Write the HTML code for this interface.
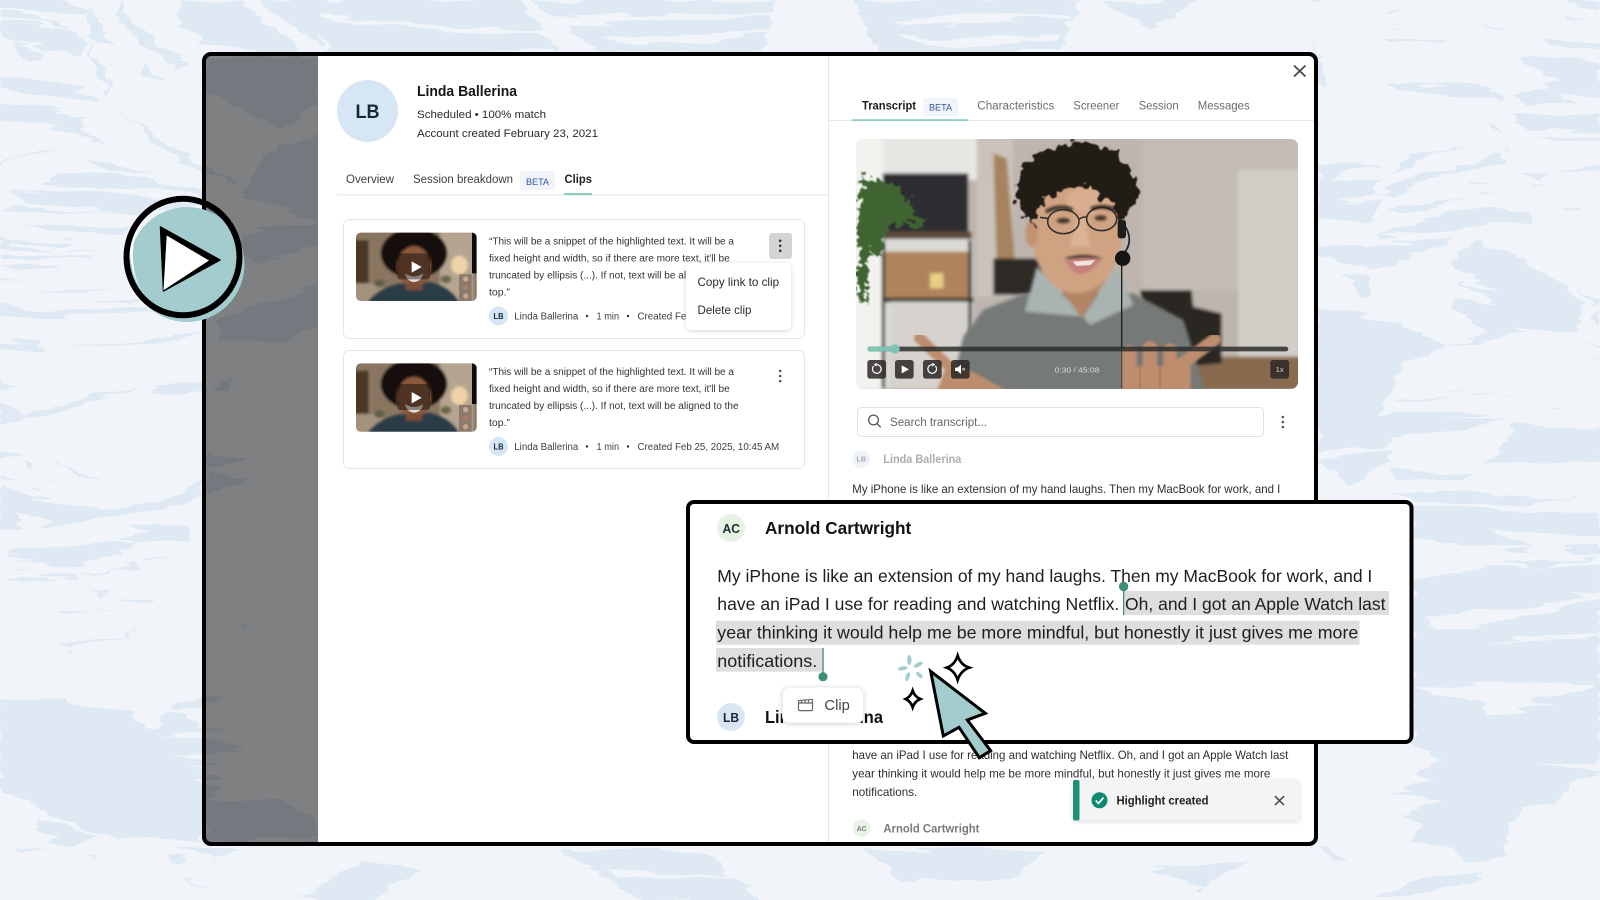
<!DOCTYPE html>
<html lang="en"><head><meta charset="utf-8"><title>Clips and transcript</title>
<style>
html,body{margin:0;padding:0;background:#f1f5f9;width:1600px;height:900px;overflow:hidden}
svg{display:block}
text{font-family:"Liberation Sans",sans-serif;fill:#2a2a2a;white-space:pre}
.b{font-weight:700}
.s{font-size:9.8px;fill:#333}
.m{font-size:9.8px;fill:#404040}
.t{font-size:11.5px;fill:#3c3c3c}
.g{font-size:11.5px;fill:#6d6d6d}
.big{font-size:17.5px;fill:#1e1e1e}
.body{font-size:11.8px;fill:#2e2e2e}
.beta{font-size:9.5px;fill:#2f56a0}
</style></head><body>
<svg xmlns="http://www.w3.org/2000/svg" width="1600" height="900" viewBox="0 0 1600 900">
<defs>
<filter id="brush" filterUnits="userSpaceOnUse" x="0" y="0" width="1600" height="900">
<feTurbulence type="fractalNoise" baseFrequency=".012 .1" numOctaves="3" seed="4" result="n"/>
<feDisplacementMap in="SourceGraphic" in2="n" scale="16" xChannelSelector="R" yChannelSelector="G"/>
</filter>
<filter id="bl" x="-5%" y="-5%" width="110%" height="110%"><feGaussianBlur stdDeviation="5"/></filter>
<filter id="bl2" x="-5%" y="-5%" width="110%" height="110%"><feGaussianBlur stdDeviation="4"/></filter>
<filter id="curl" x="-15%" y="-15%" width="130%" height="130%">
<feTurbulence type="fractalNoise" baseFrequency=".035" numOctaves="2" seed="7" result="n"/>
<feDisplacementMap in="SourceGraphic" in2="n" scale="55" xChannelSelector="R" yChannelSelector="G"/>
<feGaussianBlur stdDeviation="1.5"/>
</filter>
<filter id="leaf" x="-15%" y="-15%" width="130%" height="130%">
<feTurbulence type="fractalNoise" baseFrequency=".05" numOctaves="2" seed="3" result="n"/>
<feDisplacementMap in="SourceGraphic" in2="n" scale="70" xChannelSelector="R" yChannelSelector="G"/>
<feGaussianBlur stdDeviation="2"/>
</filter>
<filter id="sh" x="-20%" y="-20%" width="140%" height="140%"><feDropShadow dx="0" dy="1" stdDeviation="2.5" flood-color="#000" flood-opacity=".16"/></filter>
<clipPath id="vc"><rect x="856" y="139" width="442" height="250" rx="7"/></clipPath>
<clipPath id="tc"><rect x="48" y="38" width="362" height="205" rx="14"/></clipPath>
<g id="thumb"><g clip-path="url(#tc)">
<g filter="url(#bl2)">
<rect x="40" y="30" width="380" height="220" fill="#8a7661"/>
<rect x="40" y="60" width="46" height="135" fill="#4a3827"/>
<rect x="40" y="190" width="90" height="60" fill="#a3927e"/>
<rect x="300" y="30" width="100" height="215" fill="#b5a48f"/>
<ellipse cx="358" cy="135" rx="25" ry="28" fill="#efd2a8"/>
<ellipse cx="318" cy="178" rx="16" ry="12" fill="#66694a"/>
<ellipse cx="118" cy="190" rx="16" ry="12" fill="#5e5f44"/>
<path d="M80 250Q110 205 175 190L270 185Q335 200 360 250Z" fill="#2b3d47"/>
<ellipse cx="222" cy="100" rx="100" ry="76" fill="#120e0c"/>
<ellipse cx="222" cy="140" rx="50" ry="62" fill="#8b5a3e"/>
<rect x="198" y="188" width="48" height="22" fill="#7b4d34"/>
</g>
<path d="M195 160Q222 178 250 160Q245 184 222 186Q200 184 195 160Z" fill="#e9e0d8"/>
<rect x="396" y="30" width="14" height="130" fill="#0a0a0a"/>
<rect x="357" y="163" width="38" height="80" fill="#8a7a6c"/>
<circle cx="377" cy="177" r="8" fill="#c9a890"/><circle cx="377" cy="202" r="8" fill="#a77f63"/><circle cx="377" cy="228" r="8" fill="#c5a48e"/>
</g>
<rect x="172" y="100" width="98" height="78" rx="8" fill="#000" opacity=".42"/>
<path d="M215 124L245 141L215 158Z" fill="#fff"/>
</g>
</defs>

<rect width="1600" height="900" fill="#f1f5f9"/>
<!-- background brush strokes -->
<g filter="url(#brush)">
<g fill="#dfe9f4">
<g transform="scale(.33333)">
<path d="M0 30Q130 50 250 110L250 160Q130 130 110 180L70 190Q40 130 0 100Z"/>
<path d="M0 0L180 0L265 30L260 45L140 38L0 20Z"/>
<path d="M0 220Q170 240 300 290L300 305Q200 300 0 260Z"/>
<path d="M0 320Q150 320 275 350L240 360L240 385L340 440L220 400Q100 360 0 360Z"/>
<path d="M270 20L340 130L290 135L260 60Z"/><path d="M260 130L330 250L325 280L290 230Z"/>
<path d="M360 10Q450 130 560 180L530 210L420 130L350 40Z"/>
<path d="M530 0L720 0L900 150L900 170L620 135L540 70Z"/>
<path d="M780 0L960 0L960 140Z"/>
<path d="M360 320Q430 400 600 490L715 550L610 520Q440 430 360 320Z"/>
<path d="M420 190L510 250L430 230Z"/>
<path d="M620 170L960 170L960 320L840 380L700 310L620 270Z"/>
<path d="M960 400L790 470L720 590L610 560L960 660Z"/>
<path d="M720 700L960 660L960 735L780 790L720 760Z"/>
<path d="M650 960L960 850L960 975L850 1020L660 1030Z"/>
<path d="M620 1180L710 1125L670 1180Z"/>
<path d="M0 490Q60 450 180 450L90 460L30 480L0 505Z"/>
<path d="M160 520Q350 510 610 570L610 590L450 560Q300 570 120 545Z"/>
<path d="M260 480Q400 490 450 520L300 505Z"/>
<path d="M30 575Q300 570 610 610L420 640L200 640L0 630Q100 610 60 590Z"/>
<path d="M60 670L400 680L380 710L130 690Z"/>
<path d="M0 710L220 720L140 750L0 745Z"/>
<path d="M200 740L290 750L210 755Z"/>
<path d="M0 760L300 770L100 780L0 775Z"/>
<path d="M0 800L190 805L60 815Z"/><path d="M0 830L90 842L0 845Z"/>
<path d="M120 868L370 870L250 880Z"/><path d="M260 905L430 895L400 915Z"/>
<path d="M0 915L130 930L300 925L470 925L380 945L130 960L0 945Z"/>
<path d="M0 1025L120 1025L150 1045L110 1050L0 1045Z"/>
<path d="M170 1035Q400 1030 600 995L530 1025L300 1035Z"/>
<path d="M0 1140L50 1165L0 1170Z"/>
<path d="M0 1205L70 1240Q200 1215 290 1185L440 1160L300 1200L190 1230L0 1270Z"/>
<path d="M460 1165L620 1150L610 1175L510 1185Z"/>
</g>
<g transform="translate(0,450) scale(.33333)">
<path d="M0 745L190 745L400 800L430 830L465 835L495 790L550 795L610 830L690 840L620 850L480 855L610 870L730 900L620 905L520 905L620 925L680 945L560 950L690 985L570 990L660 1025L620 1045L840 1060L960 1120L960 1170L620 1170L620 1110L520 1085L620 1100L600 1170L430 1165L360 1170L230 1135L170 1110L100 1060L0 1015Z"/>
<path d="M515 770Q580 740 690 745L570 765L530 785Z"/>
<path d="M0 110L40 115L100 150L300 180L470 155L560 130L590 90L610 70L610 130L540 170L300 205L130 245L170 210L50 190L80 240L0 240Z"/>
<path d="M110 0Q250 90 400 115L240 80Z"/><path d="M0 5L70 15L0 25Z"/><path d="M70 35L110 50L90 52Z"/><path d="M0 70L50 85L0 85Z"/><path d="M120 70L175 98L150 90Z"/><path d="M80 110L130 125L110 125Z"/>
<path d="M390 230L560 225L570 270L420 280L350 265L450 245Z"/>
<path d="M30 300L240 285L350 275L420 285L360 300L380 315L200 350L40 325L120 320L30 310Z"/>
<path d="M435 320L500 315L440 335Z"/><path d="M310 360L420 340L400 360Z"/><path d="M230 370L350 370L300 380Z"/>
<path d="M40 355L110 355L60 362Z"/><path d="M100 380L230 375L240 388L150 390Z"/><path d="M10 385L170 400L60 400Z"/>
<path d="M110 428L175 435L120 434Z"/><path d="M265 428L340 420L300 445Z"/><path d="M340 450L470 445L440 460Z"/><path d="M175 480L265 490L200 500Z"/><path d="M285 478L350 485L300 486Z"/><path d="M175 590L420 545L350 565L210 600Z"/>
<path d="M620 0L750 25L650 40L620 40Z"/><path d="M620 60L750 85L640 130L620 130Z"/><path d="M715 530L750 515L725 540Z"/>
<path d="M105 1110L290 1160L210 1185L110 1150Z"/><path d="M40 1190L135 1190L60 1215Z"/><path d="M240 1215L300 1225L285 1232Z"/>
<path d="M520 1190L730 1205L640 1225Z"/><path d="M500 1225L560 1225L530 1240Z"/><path d="M650 1260L715 1262L660 1265Z"/><path d="M550 1290L650 1305L600 1307Z"/>
</g>
<g transform="translate(1300,0) scale(.33333)">
<path d="M255 45L310 28L270 50Z"/><path d="M270 90L335 80L275 97Z"/><path d="M260 115L435 120L400 130L260 128Z"/><path d="M545 60L625 90L590 90Z"/><path d="M730 120L900 130L900 148L750 135Z"/><path d="M800 0L900 0L900 35L840 15Z"/><path d="M800 50L860 58L810 62Z"/>
<path d="M0 0L85 0L50 18Z"/><path d="M40 130L90 270L50 250Z"/>
<path d="M270 248L460 255L610 280L610 300L440 292L300 275Z"/>
<path d="M665 175L900 180L900 290L780 280L840 320L680 315L640 280L780 240L660 205Z"/>
<path d="M630 342L900 345L900 395L690 380Z"/><path d="M700 405L900 410L900 425L760 425Z"/>
<path d="M570 380L590 378L612 405Z"/><path d="M595 425L660 470L620 450Z"/>
<path d="M55 495L260 505L110 515L95 545L240 550L220 585L340 560L110 600L245 605L205 665L130 660L55 655Z"/>
<path d="M270 535L330 460L530 430L400 460Z"/>
<path d="M325 535L600 465L620 495L430 520L270 590L240 580Z"/>
<path d="M255 625L520 600L340 640L300 640Z"/>
<path d="M290 680L450 640L570 625L690 625L700 675L570 660L400 700L220 720Z"/>
<path d="M55 740L280 725L460 720L350 765L205 805L170 785L55 770Z"/>
<path d="M135 828L200 830L215 875L185 880Z"/>
<path d="M655 515L745 515L710 545Z"/><path d="M690 555L725 555L695 570Z"/><path d="M775 510L900 500L900 515Z"/><path d="M780 620L870 625L800 628Z"/><path d="M500 540L560 540L505 545Z"/><path d="M545 580L595 585L545 590Z"/>
<path d="M450 795L520 730L680 770L715 805L850 905L830 1000L760 990L640 975L690 995L640 1010L440 1035L560 1005L465 930L460 890L600 910L500 860L475 845L610 875L490 825Z"/>
<path d="M830 865L900 905L880 910Z"/><path d="M870 950L900 930L900 975Z"/><path d="M830 1020L900 1040L900 1045Z"/><path d="M865 1065L900 1075L900 1080Z"/>
<path d="M55 925Q270 950 440 1040L360 1060L280 1130L240 1250L290 1240L480 1225L590 1240L420 1255L630 1250L560 1280L280 1320L250 1350L55 1350Z"/>
<path d="M280 1205L450 1190L350 1212Z"/><path d="M445 1172L515 1163L450 1178Z"/><path d="M520 1188L700 1197L530 1192Z"/><path d="M750 1220L805 1222L760 1228Z"/>
<path d="M640 1280L900 1290L900 1350L590 1350L640 1300Z"/>
</g>
<g transform="translate(1300,450) scale(.33333)">
<path d="M550 40L600 0L900 0L900 45L640 45Z"/><path d="M55 30L290 0L220 60L150 100Z"/><path d="M270 60L520 70L470 85L290 90Z"/><path d="M260 125L840 145L600 160L340 150Z"/>
<path d="M340 170L900 190L900 250L570 240L700 300L420 290L340 260Z"/>
<path d="M800 295L900 285L900 320L820 315Z"/><path d="M600 330L900 330L700 350Z"/>
<path d="M340 390L450 355L900 345L900 800L340 800Z"/>
<path d="M340 770L900 700L900 970L830 985L770 1060L680 1070L630 1120L610 1220L500 1230L460 1190L330 1180L360 1130L310 1090L430 1050L270 1025L400 1000L350 965L430 930L340 880Z"/>
<path d="M55 1180L150 1230L100 1230Z"/><path d="M220 1350L400 1270L550 1275L480 1310L300 1350Z"/>
</g>
<path d="M300 0L520 0L560 52L330 52Z"/>
<path d="M530 0L780 0L760 52L600 52Z"/>
<path d="M850 0L1080 0L1060 52L880 52Z"/>
<path d="M1100 0L1200 0L1150 30Z"/>
<path d="M300 900L360 860L420 870L370 900Z"/>
<path d="M560 850L700 850L760 900L640 900Z"/>
<path d="M860 850L1050 850L1010 880L900 880Z"/>
<path d="M1150 870L1250 860L1200 890Z"/>
</g>
<g fill="#f1f5f9" transform="translate(1300,450) scale(.33333)">
<path d="M380 495L700 470L890 430L900 445L720 490L540 530L400 540Z"/>
<path d="M540 578L900 548L900 558L600 580Z"/>
<path d="M350 708L870 700L880 715L690 750L770 770L540 795L560 755L400 735Z"/>
<path d="M700 930L900 940L900 965L850 955Z"/>
<path d="M820 430L900 430L900 445Z"/>
</g>
<g fill="#f1f5f9">
<path d="M0 15L85 34L0 22Z"/><path d="M0 40L82 60L30 50Z"/><path d="M20 62L90 75L40 72Z"/>
<path d="M320 14L550 34L550 38L330 20Z"/><path d="M540 18L780 12L780 16L560 26Z"/><path d="M600 38L770 30L770 34L640 44Z"/>
<path d="M890 20L1070 14L1070 18L900 26Z"/><path d="M900 38L1060 36L1060 40L930 44Z"/>
<path d="M10 200L140 215L10 205Z"/><path d="M10 240L120 252L10 245Z"/>
<path d="M600 870L740 876L740 880L620 876Z"/>
</g>
</g>

<!-- modal -->
<rect x="206" y="56" width="112" height="786" fill="#000" opacity=".48"/>
<rect x="318" y="56" width="996" height="786" fill="#fff"/>
<rect x="828" y="56" width="1" height="786" fill="#e8e8e8"/>

<!-- left: profile -->
<ellipse cx="367.5" cy="111" rx="30.5" ry="31" fill="#d7e6f4"/>
<text x="355.5" y="118" class="b" style="font-size:19px;fill:#14263a" textLength="24" lengthAdjust="spacingAndGlyphs">LB</text>
<text x="417" y="96" class="b" style="font-size:14.5px;fill:#161616" textLength="100" lengthAdjust="spacingAndGlyphs">Linda Ballerina</text>
<text x="417" y="118" style="font-size:11.3px" fill="#333" textLength="129" lengthAdjust="spacingAndGlyphs">Scheduled • 100% match</text>
<text x="417" y="137" style="font-size:11.3px" fill="#333" textLength="181" lengthAdjust="spacingAndGlyphs">Account created February 23, 2021</text>
<text x="346" y="183" class="t" textLength="48" lengthAdjust="spacingAndGlyphs">Overview</text>
<text x="413" y="183" class="t" textLength="100" lengthAdjust="spacingAndGlyphs">Session breakdown</text>
<rect x="520" y="171" width="35" height="19" rx="3" fill="#f1f5fb"/>
<text x="526" y="185" class="beta" textLength="23" lengthAdjust="spacingAndGlyphs">BETA</text>
<text x="564.5" y="183" class="t b" style="fill:#222" textLength="27.5" lengthAdjust="spacingAndGlyphs">Clips</text>
<rect x="337" y="194" width="491" height="1.5" fill="#ececec"/>
<rect x="564" y="193" width="28" height="2.2" fill="#8fd0c0"/>

<!-- card 1 -->
<rect x="343.5" y="219.5" width="461" height="119" rx="6" fill="#fff" stroke="#e6e6e6"/>
<use href="#thumb" transform="translate(340,220) scale(.33333)"/>
<text x="489" y="244.5" class="s" textLength="245" lengthAdjust="spacingAndGlyphs">“This will be a snippet of the highlighted text. It will be a</text>
<text x="489" y="261.5" class="s" textLength="240.7" lengthAdjust="spacingAndGlyphs">fixed height and width, so if there are more text, it'll be</text>
<text x="489" y="278.5" class="s" textLength="249.6" lengthAdjust="spacingAndGlyphs">truncated by ellipsis (...). If not, text will be aligned to the</text>
<text x="489" y="295.5" class="s" textLength="21" lengthAdjust="spacingAndGlyphs">top.”</text>
<circle cx="498.5" cy="316" r="9.5" fill="#d7e6f4"/>
<text x="493.5" y="319" class="b" style="font-size:8px;fill:#14263a" textLength="10" lengthAdjust="spacingAndGlyphs">LB</text>
<text x="514.3" y="319.5" class="m" textLength="64" lengthAdjust="spacingAndGlyphs">Linda Ballerina</text>
<circle cx="587" cy="316" r="1.2" fill="#333"/>
<text x="596.5" y="319.5" class="m" textLength="22.6" lengthAdjust="spacingAndGlyphs">1 min</text>
<circle cx="628" cy="316" r="1.2" fill="#333"/>
<text x="637.5" y="319.5" class="m" textLength="141.7" lengthAdjust="spacingAndGlyphs">Created Feb 25, 2025, 10:45 AM</text>
<rect x="769" y="233" width="23" height="26" rx="3" fill="#d4d4d4"/>
<g fill="#333"><circle cx="780.2" cy="240.8" r="1.3"/><circle cx="780.2" cy="245.8" r="1.3"/><circle cx="780.2" cy="250.8" r="1.3"/></g>
<rect x="686" y="263" width="105" height="67" rx="5" fill="#fff" filter="url(#sh)"/>
<text x="697.5" y="286" style="font-size:11.8px" fill="#333" textLength="81.6" lengthAdjust="spacingAndGlyphs">Copy link to clip</text>
<text x="697.5" y="314" style="font-size:11.8px" fill="#333" textLength="54" lengthAdjust="spacingAndGlyphs">Delete clip</text>

<!-- card 2 -->
<rect x="343.5" y="350.5" width="461" height="118" rx="6" fill="#fff" stroke="#e6e6e6"/>
<use href="#thumb" transform="translate(340,350.7) scale(.33333)"/>
<text x="489" y="374.8" class="s" textLength="245" lengthAdjust="spacingAndGlyphs">“This will be a snippet of the highlighted text. It will be a</text>
<text x="489" y="391.8" class="s" textLength="240.7" lengthAdjust="spacingAndGlyphs">fixed height and width, so if there are more text, it'll be</text>
<text x="489" y="408.8" class="s" textLength="249.6" lengthAdjust="spacingAndGlyphs">truncated by ellipsis (...). If not, text will be aligned to the</text>
<text x="489" y="426" class="s" textLength="21" lengthAdjust="spacingAndGlyphs">top.”</text>
<circle cx="498.5" cy="446.5" r="9.5" fill="#d7e6f4"/>
<text x="493.5" y="449.5" class="b" style="font-size:8px;fill:#14263a" textLength="10" lengthAdjust="spacingAndGlyphs">LB</text>
<text x="514.3" y="450" class="m" textLength="64" lengthAdjust="spacingAndGlyphs">Linda Ballerina</text>
<circle cx="587" cy="446.5" r="1.2" fill="#333"/>
<text x="596.5" y="450" class="m" textLength="22.6" lengthAdjust="spacingAndGlyphs">1 min</text>
<circle cx="628" cy="446.5" r="1.2" fill="#333"/>
<text x="637.5" y="450" class="m" textLength="141.7" lengthAdjust="spacingAndGlyphs">Created Feb 25, 2025, 10:45 AM</text>
<g fill="#555"><circle cx="780.2" cy="371" r="1.3"/><circle cx="780.2" cy="376" r="1.3"/><circle cx="780.2" cy="381" r="1.3"/></g>

<!-- right: tabs -->
<path d="M1294 65.5L1305.5 76.5M1305.5 65.5L1294 76.5" stroke="#444" stroke-width="1.7" fill="none"/>
<text x="862" y="109.5" class="t b" style="fill:#1c1c1c" textLength="54" lengthAdjust="spacingAndGlyphs">Transcript</text>
<rect x="923" y="98" width="35" height="18" rx="3" fill="#f1f5fb"/>
<text x="929" y="110.5" class="beta" textLength="23" lengthAdjust="spacingAndGlyphs">BETA</text>
<text x="977.3" y="109.5" class="g" textLength="77" lengthAdjust="spacingAndGlyphs">Characteristics</text>
<text x="1073.3" y="109.5" class="g" textLength="46" lengthAdjust="spacingAndGlyphs">Screener</text>
<text x="1138.7" y="109.5" class="g" textLength="40" lengthAdjust="spacingAndGlyphs">Session</text>
<text x="1197.7" y="109.5" class="g" textLength="52" lengthAdjust="spacingAndGlyphs">Messages</text>
<rect x="828" y="120" width="486" height="1" fill="#e6e6e6"/>
<rect x="852" y="119.2" width="116" height="1.8" fill="#8fd0c0"/>

<!-- video -->
<g clip-path="url(#vc)">
<g transform="translate(850,130) scale(.33333)">
<g filter="url(#bl)">
<rect x="-10" y="10" width="1380" height="780" fill="#bdb5ae"/>
<rect x="880" y="20" width="480" height="460" fill="#c4bdb6"/>
<rect x="1165" y="120" width="190" height="570" fill="#d2cec7"/>
<rect x="850" y="680" width="510" height="100" fill="#8a6a50"/>
<rect x="90" y="20" width="300" height="130" fill="#e8e7e4"/>
<rect x="380" y="20" width="110" height="480" fill="#cbc2ba"/>
<rect x="100" y="325" width="270" height="450" fill="#dcdad6"/>
<rect x="0" y="20" width="100" height="760" fill="#f2f2ef"/>
<rect x="98" y="130" width="257" height="185" fill="#2d2e33"/>
<rect x="95" y="305" width="270" height="22" fill="#5f4b3b"/>
<rect x="105" y="365" width="260" height="145" fill="#b0835c"/>
<rect x="240" y="430" width="40" height="45" fill="#e8cf85"/>
<rect x="100" y="503" width="270" height="14" fill="#3c3733"/>
<rect x="120" y="515" width="240" height="260" fill="#d6d3ce"/>
<path d="M100 330V775M360 330V775" stroke="#333" stroke-width="10"/>
<path d="M430 70L470 85L495 395L440 395Z" fill="#a5835f"/>
<rect x="430" y="385" width="160" height="110" fill="#2d2a27"/>
<path d="M870 480L1025 480L1030 530L1115 550L1115 700L900 720Z" fill="#2a2624"/>
</g>
<path d="M30 140L90 150L150 170L225 300L160 280L110 300L90 380L55 360L50 520L20 480Z" fill="#3f6430" filter="url(#leaf)"/>
<g filter="url(#bl)">
<path d="M300 790L340 620L400 540L525 490L850 490L1000 570L1035 680L1065 790Z" fill="#757977"/>
<path d="M525 545L560 410L700 560L800 410L850 525L720 585L700 560Z" fill="#a9b3b1"/>
<path d="M590 420L695 565L780 430L780 400L590 400Z" fill="#b28463"/>
<ellipse cx="680" cy="310" rx="135" ry="180" fill="#cfa282"/>
<ellipse cx="545" cy="310" rx="18" ry="40" fill="#c09272"/>
<ellipse cx="720" cy="210" rx="70" ry="40" fill="#d9ae90"/>
<path d="M680 260L660 350L720 350L705 260Z" fill="#dab295"/>
</g>
<path d="M490 190Q500 100 590 60Q680 20 770 50Q860 100 870 190L815 280L785 215L690 165L575 205L555 290L520 260Z" fill="#221c19" filter="url(#curl)"/>
<g fill="none" stroke="#2e2b2c" stroke-width="4.5">
<ellipse cx="640" cy="275" rx="47" ry="36"/><ellipse cx="755" cy="267" rx="45" ry="35"/><path d="M687 268Q700 258 712 262M593 265L570 262"/>
</g>
<g fill="#2a211c" filter="url(#bl2)" opacity=".85">
<path d="M585 240Q630 215 670 235L665 245Q630 230 590 250Z"/><path d="M720 232Q760 215 800 235L795 245Q760 230 725 242Z"/>
<ellipse cx="640" cy="272" rx="20" ry="8"/><ellipse cx="752" cy="264" rx="18" ry="8"/>
<path d="M645 385Q700 365 755 385L725 395L675 398Z"/>
</g>
<path d="M645 388Q700 378 755 385Q725 432 690 432Q660 425 645 388Z" fill="#c4827a" filter="url(#bl2)"/>
<path d="M668 395L735 390L722 405L680 408Z" fill="#f0e5df"/>
<path d="M815 400L815 775" stroke="#1d1d1d" stroke-width="4"/>
<path d="M820 280Q855 330 822 370" stroke="#222" stroke-width="5" fill="none"/>
<rect x="803" y="270" width="25" height="55" rx="8" fill="#1d1d1d"/>
<circle cx="818" cy="385" r="23" fill="#151515"/>
<g filter="url(#bl2)" stroke="#bd8d6e" stroke-linecap="round" fill="#bd8d6e">
<path d="M208 624L310 722" stroke-width="32" fill="none"/>
<path d="M262 790L295 700L370 730L480 790Z" stroke-width="6"/>
<path d="M838 668V790" stroke-width="44" fill="none"/><path d="M900 655V790" stroke-width="44" fill="none"/><path d="M960 660V790" stroke-width="40" fill="none"/>
<path d="M1095 628L990 705" stroke-width="38" fill="none"/>
<path d="M830 710H1020V790H830Z" stroke-width="4"/>
</g>
<path d="M870 650V780M930 645V780" stroke="#8a6349" stroke-width="3" fill="none" opacity=".6"/>
<rect x="52" y="650" width="1263" height="14" rx="7" fill="#2e2f2d" opacity=".85"/>
<rect x="52" y="650" width="83" height="14" rx="7" fill="#7cc4b4"/>
<circle cx="135" cy="657" r="14" fill="#7cc4b4"/>
<g fill="#2a2726" opacity=".85">
<rect x="52" y="690" width="56" height="56" rx="8"/><rect x="135" y="690" width="56" height="56" rx="8"/><rect x="219" y="690" width="56" height="56" rx="8"/><rect x="303" y="690" width="56" height="56" rx="8"/><rect x="1261" y="690" width="56" height="56" rx="8"/>
</g>
<g fill="none" stroke="#fff" stroke-width="3.5">
<path d="M71 708A13 13 0 1 0 80 704"/><path d="M256 708A13 13 0 1 1 247 704"/>
</g>
<path d="M80 698L71 704L80 710Z M247 698L256 704L247 710Z" fill="#fff"/>
<path d="M155 706L177 718L155 730Z" fill="#fff"/>
<path d="M315 713H322L333 704V732L322 723H315Z" fill="#fff"/>
<path d="M337 714L345 722M345 714L337 722" stroke="#ddd" stroke-width="2"/>
<text x="614" y="728" style="font-size:22px;fill:#ddd" textLength="134" lengthAdjust="spacingAndGlyphs">0:30 / 45:08</text>
<text x="1277" y="726" style="font-size:21px;fill:#d5d5d5" textLength="24" lengthAdjust="spacingAndGlyphs">1x</text>
</g>
</g>

<!-- search -->
<rect x="857.5" y="407.5" width="406" height="29" rx="4" fill="#fff" stroke="#e0e0e0"/>
<circle cx="873.5" cy="420" r="4.9" fill="none" stroke="#555" stroke-width="1.3"/>
<path d="M877 423.5L880.8 427.3" stroke="#555" stroke-width="1.3"/>
<text x="890" y="426" style="font-size:11.5px;fill:#666" textLength="97" lengthAdjust="spacingAndGlyphs">Search transcript...</text>
<g fill="#555"><circle cx="1282.8" cy="417" r="1.3"/><circle cx="1282.8" cy="422" r="1.3"/><circle cx="1282.8" cy="427" r="1.3"/></g>

<!-- transcript -->
<circle cx="861.3" cy="459" r="9" fill="#eef3f9"/>
<text x="856.5" y="461.7" class="b" style="font-size:7.5px;fill:#aaa" textLength="9.6" lengthAdjust="spacingAndGlyphs">LB</text>
<text x="883.3" y="463" class="b" style="font-size:11.5px;fill:#adadad" textLength="78" lengthAdjust="spacingAndGlyphs">Linda Ballerina</text>
<text x="852.3" y="493" class="body" textLength="428" lengthAdjust="spacingAndGlyphs">My iPhone is like an extension of my hand laughs. Then my MacBook for work, and I</text>
<text x="852.3" y="759" class="body" textLength="436" lengthAdjust="spacingAndGlyphs">have an iPad I use for reading and watching Netflix. Oh, and I got an Apple Watch last</text>
<text x="852.3" y="777.3" class="body" textLength="418" lengthAdjust="spacingAndGlyphs">year thinking it would help me be more mindful, but honestly it just gives me more</text>
<text x="852.3" y="796" class="body" textLength="65" lengthAdjust="spacingAndGlyphs">notifications.</text>
<circle cx="861.7" cy="828.3" r="9" fill="#e8f4e6"/>
<text x="856.7" y="831" class="b" style="font-size:7.5px;fill:#7a7a7a" textLength="10" lengthAdjust="spacingAndGlyphs">AC</text>
<text x="883.4" y="832.5" class="b" style="font-size:11.5px;fill:#7a7a7a" textLength="96" lengthAdjust="spacingAndGlyphs">Arnold Cartwright</text>

<!-- toast -->
<rect x="1073" y="780" width="226.5" height="40.5" rx="3" fill="#f4f4f4" filter="url(#sh)"/>
<rect x="1073" y="780" width="6.5" height="40.5" rx="2" fill="#1f9077"/>
<circle cx="1099.5" cy="800.3" r="8" fill="#0f8a70"/>
<path d="M1095.7 800.5L1098.5 803.3L1103.5 797.6" fill="none" stroke="#fff" stroke-width="1.7"/>
<text x="1116.5" y="804.5" class="b" style="font-size:11.5px;fill:#1e1e1e" textLength="92" lengthAdjust="spacingAndGlyphs">Highlight created</text>
<path d="M1275 796.2L1284 805M1284 796.2L1275 805" stroke="#444" stroke-width="1.5" fill="none"/>

<!-- frame -->
<rect x="204" y="54" width="1112" height="790" rx="7" fill="none" stroke="#000" stroke-width="4"/>

<!-- play badge -->
<circle cx="187" cy="264.5" r="57.5" fill="#a3ccce"/>
<path d="M133 256Q132 215 172 204Q140 210 130 240Q128 280 150 300Q133 285 133 256Z" fill="#fff"/>
<ellipse cx="183" cy="257" rx="56.5" ry="58.3" fill="none" stroke="#000" stroke-width="6"/>
<path d="M160.5 227L220 260L163.5 291Z" fill="#000" stroke="#000" stroke-width="1.5" stroke-linejoin="round"/>
<path d="M166.7 235.5L209 260.5L163.5 290.3Z" fill="#fff"/>

<!-- popup -->
<rect x="688" y="502" width="723.5" height="240" rx="6" fill="#fff" stroke="#000" stroke-width="4"/>
<circle cx="731" cy="528" r="14" fill="#e5f3e3"/>
<text x="722.5" y="533" class="b" style="font-size:12.5px;fill:#173030" textLength="17.5" lengthAdjust="spacingAndGlyphs">AC</text>
<text x="765" y="534" class="b" style="font-size:17.5px;fill:#111" textLength="146.3" lengthAdjust="spacingAndGlyphs">Arnold Cartwright</text>
<rect x="1124.5" y="591" width="264.5" height="24" fill="#dedede"/>
<rect x="716" y="620.7" width="643.6" height="24" fill="#dedede"/>
<rect x="716" y="648" width="107" height="23.7" fill="#dedede"/>
<text x="717.3" y="582" class="big" textLength="655" lengthAdjust="spacingAndGlyphs">My iPhone is like an extension of my hand laughs. Then my MacBook for work, and I</text>
<text x="717.3" y="610" class="big" textLength="402" lengthAdjust="spacingAndGlyphs">have an iPad I use for reading and watching Netflix.</text>
<text x="1125" y="610" class="big" textLength="260.5" lengthAdjust="spacingAndGlyphs">Oh, and I got an Apple Watch last</text>
<text x="717.3" y="638.6" class="big" textLength="641" lengthAdjust="spacingAndGlyphs">year thinking it would help me be more mindful, but honestly it just gives me more</text>
<text x="717.3" y="667" class="big" textLength="100" lengthAdjust="spacingAndGlyphs">notifications.</text>
<rect x="1123" y="587" width="1.3" height="28" fill="#3f8f78"/>
<circle cx="1123.6" cy="586.5" r="4.7" fill="#3f8f78"/>
<rect x="822.4" y="648" width="1.3" height="28" fill="#3f8f78"/>
<circle cx="823" cy="676.7" r="4.6" fill="#3f8f78"/>
<circle cx="731" cy="717" r="14" fill="#d8e6f4"/>
<text x="723" y="722" class="b" style="font-size:12.5px;fill:#14263a" textLength="16" lengthAdjust="spacingAndGlyphs">LB</text>
<text x="765" y="723" class="b" style="font-size:17.5px;fill:#111" textLength="118" lengthAdjust="spacingAndGlyphs">Linda Ballerina</text>
<rect x="782.5" y="687" width="81" height="36" rx="7" fill="#fff" stroke="#ececec" filter="url(#sh)"/>
<path d="M798.5 703H812.5V709.2Q812.5 710.6 811 710.6H800Q798.5 710.6 798.5 709.2Z" fill="none" stroke="#666" stroke-width="1.2"/>
<path d="M798.5 703V700.5L812.5 699.5V703M802 700.4L801 703M805.5 700.2L804.5 703M809 700L808 703" fill="none" stroke="#666" stroke-width="1.1"/>
<text x="824.4" y="710" style="font-size:14.5px;fill:#444" textLength="25.5" lengthAdjust="spacingAndGlyphs">Clip</text>

<!-- sparkles + cursor -->
<g transform="translate(860,630) scale(.33333)">
<g fill="#a3ccce">
<ellipse cx="148" cy="90" rx="6.5" ry="15"/>
<ellipse cx="175" cy="104" rx="6" ry="15" transform="rotate(60 175 104)"/>
<ellipse cx="178" cy="135" rx="6" ry="12" transform="rotate(-50 178 135)"/>
<ellipse cx="143" cy="140" rx="6" ry="14" transform="rotate(20 143 140)"/>
<ellipse cx="128" cy="115" rx="6" ry="15" transform="rotate(80 128 115)"/>
</g>
<path d="M293 77Q302 105 328 113Q302 122 293 150Q284 122 260 113Q284 105 293 77Z" fill="#fff" stroke="#000" stroke-width="8" stroke-linejoin="miter"/>
<path d="M158 182Q164 200 181 207Q164 214 158 232Q152 214 137 207Q152 200 158 182Z" fill="#fff" stroke="#000" stroke-width="8"/>
<path d="M212 124L376 250L322 270L392 362L358 383L297 292L250 318Z" fill="#a3ccce" stroke="#000" stroke-width="9" stroke-linejoin="miter"/>
</g>
</svg>
</body></html>
